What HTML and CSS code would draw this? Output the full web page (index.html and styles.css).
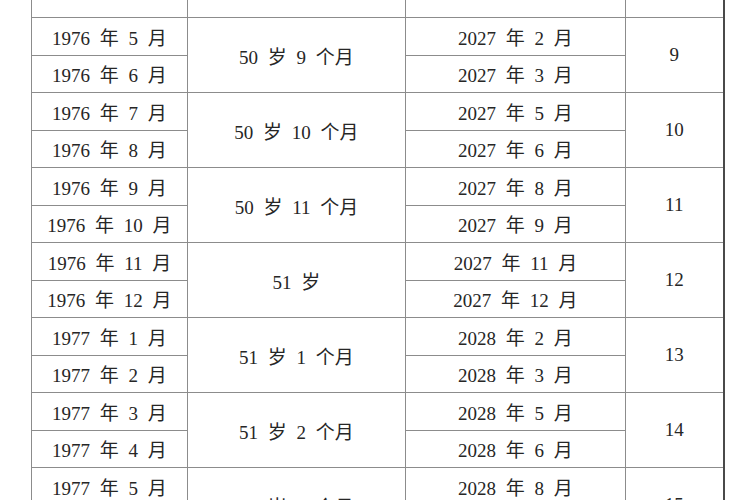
FILE: index.html
```html
<!DOCTYPE html>
<html lang="zh">
<head>
<meta charset="utf-8">
<link rel="stylesheet" href="styles.css">
</head>
<body>
<table class="grid">
  <colgroup>
    <col class="c1"><col class="c2"><col class="c3"><col class="c4">
  </colgroup>
  <tr class="head"><td></td><td></td><td></td><td class="n"></td></tr>
  <tr><td>1976 年 5 月</td><td rowspan="2">50 岁 9 个月</td><td>2027 年 2 月</td><td class="n" rowspan="2">9</td></tr>
  <tr><td>1976 年 6 月</td><td>2027 年 3 月</td></tr>
  <tr><td>1976 年 7 月</td><td rowspan="2">50 岁 10 个月</td><td>2027 年 5 月</td><td class="n" rowspan="2">10</td></tr>
  <tr><td>1976 年 8 月</td><td>2027 年 6 月</td></tr>
  <tr><td>1976 年 9 月</td><td rowspan="2">50 岁 11 个月</td><td>2027 年 8 月</td><td class="n" rowspan="2">11</td></tr>
  <tr><td>1976 年 10 月</td><td>2027 年 9 月</td></tr>
  <tr><td>1976 年 11 月</td><td rowspan="2">51 岁</td><td>2027 年 11 月</td><td class="n" rowspan="2">12</td></tr>
  <tr><td>1976 年 12 月</td><td>2027 年 12 月</td></tr>
  <tr><td>1977 年 1 月</td><td rowspan="2">51 岁 1 个月</td><td>2028 年 2 月</td><td class="n" rowspan="2">13</td></tr>
  <tr><td>1977 年 2 月</td><td>2028 年 3 月</td></tr>
  <tr><td>1977 年 3 月</td><td rowspan="2">51 岁 2 个月</td><td>2028 年 5 月</td><td class="n" rowspan="2">14</td></tr>
  <tr><td>1977 年 4 月</td><td>2028 年 6 月</td></tr>
  <tr><td>1977 年 5 月</td><td rowspan="2">51 岁 3 个月</td><td>2028 年 8 月</td><td class="n" rowspan="2">15</td></tr>
  <tr><td>1977 年 6 月</td><td>2028 年 9 月</td></tr>
</table>
</body>
</html>
```
FILE: styles.css
```css
html, body {
  margin: 0;
  padding: 0;
  background: #ffffff;
  overflow: hidden;
}
.grid {
  border-collapse: collapse;
  table-layout: fixed;
  width: 692px;
  margin-left: 31px;
  font-family: "Liberation Serif", "Noto Sans CJK SC", serif;
  font-size: 19px;
  color: #262626;
}
.c1 { width: 156px; }
.c2 { width: 218px; }
.c3 { width: 220px; }
.c4 { width: 98px; }
.grid td {
  border: 1px solid #8c8c8c;
  padding: 0;
  height: 36.5px;
  text-align: center;
  vertical-align: middle;
  white-space: nowrap;
  word-spacing: 5px;
}
.grid td.n {
  border-right: 2px solid #4a4a4a;
}
.grid .head td {
  height: 17px;
  border-top: none;
}
```
